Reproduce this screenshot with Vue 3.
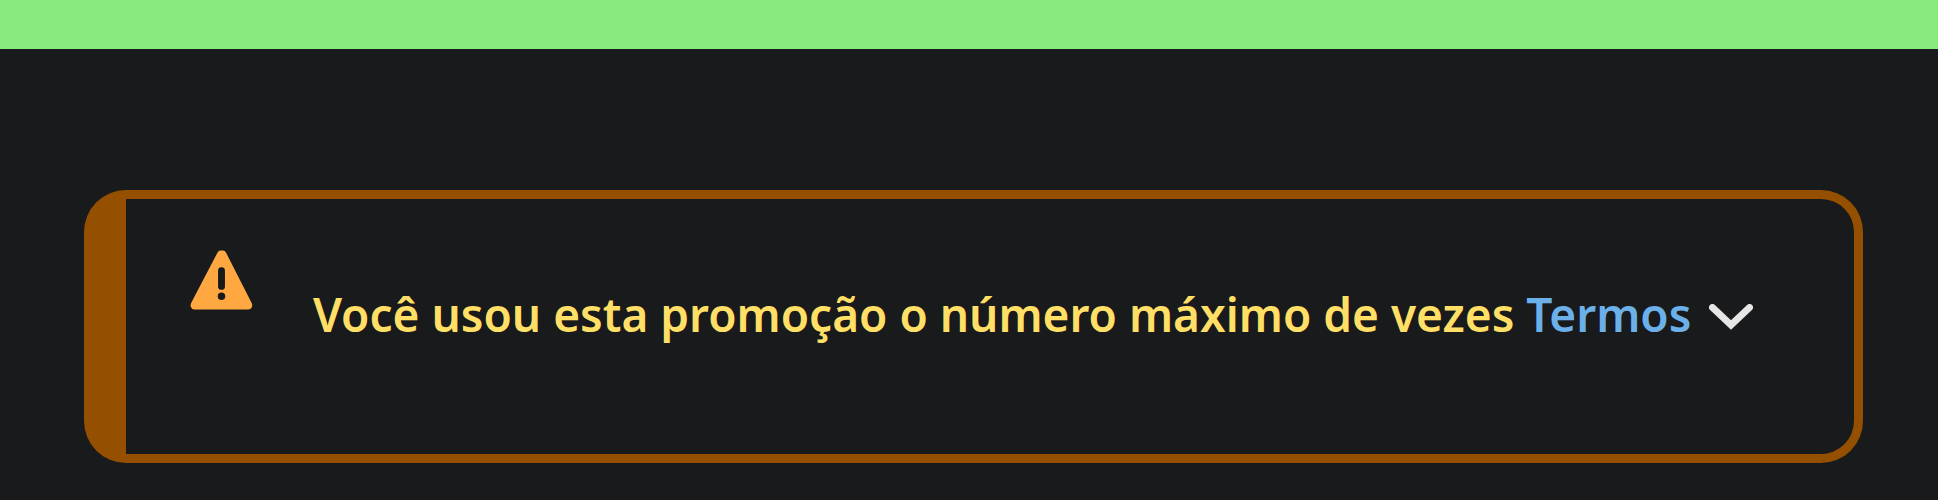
<script setup>
import { ref } from 'vue'

const open = ref(false)
</script>

<template>
  <div class="page">
    <div class="banner"></div>
    <main class="content">
      <section class="alert" role="alert">
        <svg class="warning" viewBox="0 0 64 60" aria-hidden="true">
          <path d="M28 2Q29 0 31 0h2.500Q35.500 0 36.500 2L62.500 53Q63.800 55.500 62.800 57.700T59 60H4.500Q1.900 60 1 57.700T1.300 53Z" fill="#ffa841" />
          <path d="M32 20.500v16" stroke="#17191b" stroke-width="7" stroke-linecap="round" />
          <circle cx="32" cy="46.500" r="3.800" fill="#17191b" />
        </svg>
        <div class="message">
          <p class="text">
            Você usou esta promoção o número máximo de vezes
            <a class="terms" href="#termos">Termos</a>
          </p>
          <button class="toggle" type="button" aria-label="Mostrar termos" :aria-expanded="open" @click="open = !open">
            <svg class="chevron" viewBox="0 0 44 26" aria-hidden="true">
              <path d="M3.500 3.500 22 21 40.500 3.500" fill="none" stroke="#e6e6e6" stroke-width="7" stroke-linecap="round" />
            </svg>
          </button>
        </div>
      </section>
    </main>
  </div>
</template>

<style>
html,
body {
  background: #191a1b;
}
</style>

<style scoped>
.page {
  min-height: 100vh;
  background: #191a1b;
  color: #ffdf65;
  font-family: "Noto Sans", "Open Sans", sans-serif;
}
.banner {
  height: 49px;
  background: #89eb7e;
}
.content {
  padding: 141px 75px 36px 84px;
}
.alert {
  display: flex;
  align-items: flex-start;
  gap: 60px;
  padding: 51px 60px 110px 64px;
  border: 9px solid #945000;
  border-left-width: 42px;
  border-radius: 42px;
}
.warning {
  flex: none;
  width: 63px;
  height: 60px;
}
.message {
  display: flex;
  align-items: center;
  gap: 18px;
  margin-top: 34px;
}
.text {
  margin: 0;
  font-size: 46px;
  font-weight: 600;
  line-height: 60px;
  white-space: nowrap;
}
.terms {
  color: #6cb0ea;
  text-decoration: none;
}
.toggle {
  padding: 6px 0 0;
  border: 0;
  background: none;
  cursor: pointer;
}
.chevron {
  display: block;
  width: 44px;
  height: 26px;
}
</style>
